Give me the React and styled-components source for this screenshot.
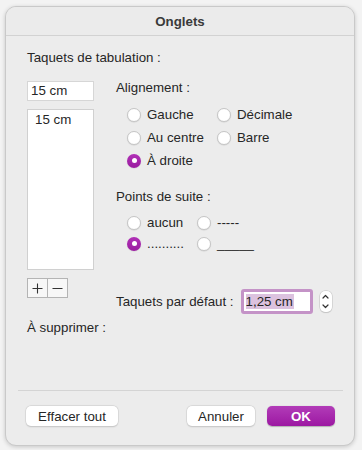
import React from 'react'
import styled, { createGlobalStyle } from 'styled-components'

const Global = createGlobalStyle`
   html, body {
      margin: 0;
      padding: 0;
      background: #f3f3f3;
   }
   body {
      font-family: 'Liberation Sans', Arial, sans-serif;
      font-size: 13.3px;
      color: #262626;
   }
`

const Page = styled.div`
   width: 362px;
   height: 450px;
   padding: 6px 0 0 5px;
   box-sizing: border-box;
`

const Window = styled.div`
   width: 350px;
   height: 440px;
   box-sizing: border-box;
   background: #ececec;
   border: 1px solid #c9c9c9;
   border-radius: 11px;
   box-shadow: 0 1px 4px rgba(0, 0, 0, 0.18);
   display: flex;
   flex-direction: column;
   overflow: hidden;
`

const TitleBar = styled.div`
   height: 28px;
   flex: none;
   display: flex;
   align-items: center;
   justify-content: center;
   font-weight: bold;
   color: #3a3a3a;
   border-bottom: 1px solid #d2d2d2;
   background: #ebebeb;
`

const Body = styled.div`
   flex: 1;
   padding: 0 20px 0 21px;
   display: flex;
   flex-direction: column;
`

const Label = styled.div`
   line-height: 14px;
   height: 14px;
   white-space: nowrap;
   margin-top: ${p => p.mt || 0}px;
`

const Columns = styled.div`
   display: grid;
   grid-template-columns: 67px 1fr;
   column-gap: 22px;
   margin-top: 16px;
`

const LeftCol = styled.div`
   display: flex;
   flex-direction: column;
`

const RightCol = styled.div`
   display: flex;
   flex-direction: column;
`

const TextField = styled.div`
   height: 20px;
   box-sizing: border-box;
   background: #fff;
   border: 1px solid #d6d6d6;
   padding-left: 3px;
   line-height: 18px;
`

const ListBox = styled.div`
   height: 161px;
   margin-top: 8px;
   box-sizing: border-box;
   background: #fff;
   border: 1px solid #d0d0d0;
   padding: 3px 0 0 7px;
   line-height: 14px;
`

const PlusMinus = styled.div`
   display: flex;
   margin-top: 8px;
   width: 41px;
   height: 20px;
   box-sizing: border-box;
   border: 1px solid #b4b4b4;
   background: #f7f7f7;
`

const PMButton = styled.div`
   flex: 1;
   display: flex;
   align-items: center;
   justify-content: center;
   border-left: ${p => (p.divider ? '1px solid #b4b4b4' : 'none')};
`

const RadioGrid = styled.div`
   display: grid;
   grid-template-columns: ${p => p.col}px auto;
   grid-auto-rows: ${p => p.row}px;
   margin-top: 8px;
   padding-left: 11px;
`

const RadioItem = styled.div`
   display: flex;
   align-items: center;
   gap: 6px;
   white-space: nowrap;
`

const RadioDot = styled.span`
   width: 14px;
   height: 14px;
   flex: none;
   box-sizing: border-box;
   border-radius: 50%;
   position: relative;
   background: ${p => (p.checked ? 'linear-gradient(#b030b6, #9a1ca0)' : '#fff')};
   border: ${p => (p.checked ? 'none' : '1px solid #c6c6c6')};
   box-shadow: 0 0.5px 1px rgba(0, 0, 0, 0.12);
   &::after {
      content: '';
      display: ${p => (p.checked ? 'block' : 'none')};
      position: absolute;
      left: 4.5px;
      top: 4.5px;
      width: 5px;
      height: 5px;
      border-radius: 50%;
      background: #fff;
   }
`

const DefaultRow = styled.div`
   display: flex;
   align-items: center;
   margin-top: 35px;
   height: 25px;
`

const FocusField = styled.div`
   margin-left: 7px;
   width: 72px;
   height: 25px;
   box-sizing: border-box;
   border: 3px solid #c493c7;
   border-radius: 3px;
   background: #fff;
   padding: 2px 0 0 2px;
`

const Selected = styled.span`
   display: inline-block;
   background: #dcc2df;
   line-height: 15px;
   padding-right: 1px;
`

const Stepper = styled.div`
   margin-left: 7px;
   width: 12px;
   height: 21px;
   box-sizing: border-box;
   border-radius: 5px;
   background: #fff;
   box-shadow: 0 0 0 0.5px #c2c2c2, 0 1px 1px rgba(0, 0, 0, 0.15);
   display: flex;
   flex-direction: column;
   align-items: center;
   justify-content: space-around;
`

const Footer = styled.div`
   flex: none;
   margin: 0 11px 0 12px;
   border-top: 1px solid #d4d4d4;
   padding: 15px 8px 19px 8px;
   display: flex;
   align-items: center;
   gap: 12px;
`

const Button = styled.div`
   height: 20px;
   min-width: ${p => p.w}px;
   box-sizing: border-box;
   padding: 0 8px;
   display: flex;
   align-items: center;
   justify-content: center;
   border-radius: 5px;
   margin-left: ${p => (p.push ? 'auto' : '0')};
   background: ${p => (p.primary ? 'linear-gradient(#b23cb8, #9c18a2)' : '#fff')};
   color: ${p => (p.primary ? '#fff' : '#262626')};
   font-weight: ${p => (p.primary ? 'bold' : 'normal')};
   box-shadow: ${p =>
      p.primary ? '0 0.5px 1px rgba(0,0,0,0.25)' : '0 0 0 0.5px #cfcfcf, 0 0.5px 1.5px rgba(0,0,0,0.2)'};
`

const Radio = ({ checked, children }) => (
   <RadioItem>
      <RadioDot checked={checked} />
      <span>{children}</span>
   </RadioItem>
)

const Chevron = ({ up }) => (
   <svg width='7' height='5' viewBox='0 0 7 5'>
      <path
         d={up ? 'M1 4 L3.5 1.5 L6 4' : 'M1 1 L3.5 3.5 L6 1'}
         fill='none'
         stroke='#333'
         strokeWidth='1.2'
         strokeLinecap='round'
         strokeLinejoin='round'
      />
   </svg>
)

const App = () => (
   <Page>
      <Global />
      <Window>
         <TitleBar>Onglets</TitleBar>
         <Body>
            <Label mt={15}>Taquets de tabulation :</Label>
            <Columns>
               <LeftCol>
                  <TextField>15 cm</TextField>
                  <ListBox>15 cm</ListBox>
                  <PlusMinus>
                     <PMButton>
                        <svg width='11' height='11' viewBox='0 0 11 11'>
                           <path d='M5.5 0.5 V10.5 M0.5 5.5 H10.5' stroke='#333' strokeWidth='1.1' />
                        </svg>
                     </PMButton>
                     <PMButton divider>
                        <svg width='11' height='11' viewBox='0 0 11 11'>
                           <path d='M0.5 5.5 H10.5' stroke='#333' strokeWidth='1.1' />
                        </svg>
                     </PMButton>
                  </PlusMinus>
               </LeftCol>
               <RightCol>
                  <Label>Alignement :</Label>
                  <RadioGrid col={90} row={23}>
                     <Radio>Gauche</Radio>
                     <Radio>Décimale</Radio>
                     <Radio>Au centre</Radio>
                     <Radio>Barre</Radio>
                     <Radio checked>À droite</Radio>
                  </RadioGrid>
                  <Label mt={18}>Points de suite :</Label>
                  <RadioGrid col={70} row={21}>
                     <Radio>aucun</Radio>
                     <Radio>-----</Radio>
                     <Radio checked>..........</Radio>
                     <Radio>_____</Radio>
                  </RadioGrid>
                  <DefaultRow>
                     <span>Taquets par défaut :</span>
                     <FocusField>
                        <Selected>1,25 cm</Selected>
                     </FocusField>
                     <Stepper>
                        <Chevron up />
                        <Chevron />
                     </Stepper>
                  </DefaultRow>
               </RightCol>
            </Columns>
            <Label mt={7}>À supprimer :</Label>
         </Body>
         <Footer>
            <Button w={92}>Effacer tout</Button>
            <Button w={68} push>
               Annuler
            </Button>
            <Button w={68} primary>
               OK
            </Button>
         </Footer>
      </Window>
   </Page>
)

export default App
